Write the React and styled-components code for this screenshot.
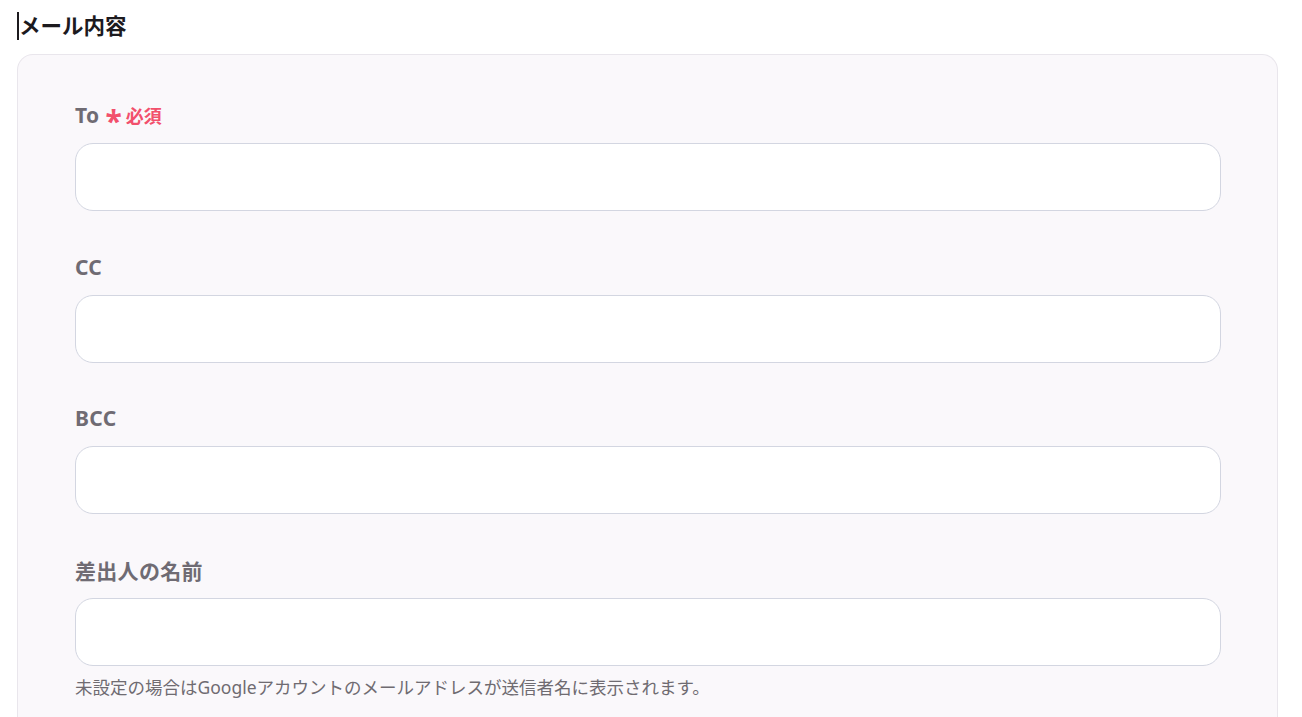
import React from 'react'
import styled, { createGlobalStyle } from 'styled-components'

const GlobalStyle = createGlobalStyle`
  body {
    margin: 0;
    background: #ffffff;
    font-family: "Noto Sans", "Noto Sans CJK JP", sans-serif;
  }
`

const fields = [
  { label: 'To', required: true },
  { label: 'CC' },
  { label: 'BCC' },
  { label: '差出人の名前', help: '未設定の場合はGoogleアカウントのメールアドレスが送信者名に表示されます。' },
]

const App = () => {
  return (
    <>
      <GlobalStyle />
      <Page>
        <Heading><Caret />メール内容</Heading>
        <Card>
          {fields.map((f) => (
            <Field key={f.label}>
              <Label>
                {f.label}
                {f.required && (
                  <Required>
                    <Star>*</Star>必須
                  </Required>
                )}
              </Label>
              <Input type="text" />
              {f.help && <Help>{f.help}</Help>}
            </Field>
          ))}
        </Card>
      </Page>
    </>
  )
}

export default App

const Page = styled.div`
  padding: 12px 24px 0 17px;
`

const Heading = styled.h2`
  display: flex;
  align-items: center;
  margin: 0 0 14px;
  height: 28px;
  font-size: 21.5px;
  font-weight: 700;
  color: #1c1a1e;
  line-height: 28px;
`

const Caret = styled.span`
  display: inline-block;
  width: 2px;
  height: 28px;
  background: #1c1a1e;
`

const Card = styled.div`
  background: #faf8fb;
  border: 1px solid #e9e6ec;
  border-bottom: none;
  border-radius: 16px 16px 0 0;
  padding: 48px 56px 40px 57px;
  display: flex;
  flex-direction: column;
  gap: 43.5px;
`

const Field = styled.div`
  display: flex;
  flex-direction: column;
`

const Label = styled.label`
  display: flex;
  align-items: center;
  height: 24px;
  margin-bottom: 16px;
  font-size: 21px;
  font-weight: 700;
  color: #6f6b73;
  letter-spacing: 0.3px;
`

const Required = styled.span`
  display: inline-flex;
  align-items: center;
  margin-left: 6px;
  font-size: 18px;
  font-weight: 700;
  color: #f2506c;
  letter-spacing: 0;
`

const Star = styled.span`
  font-size: 30px;
  line-height: 1;
  margin-right: 4px;
  transform: translateY(6px);
`

const Input = styled.input`
  box-sizing: border-box;
  height: 68px;
  width: 100%;
  border: 1px solid #d3d6e1;
  border-radius: 18px;
  background: #ffffff;
  padding: 0 18px;
  font-size: 16px;
  outline: none;
`

const Help = styled.p`
  margin: 8px 0 0;
  font-size: 17.5px;
  color: #6f6b71;
`
